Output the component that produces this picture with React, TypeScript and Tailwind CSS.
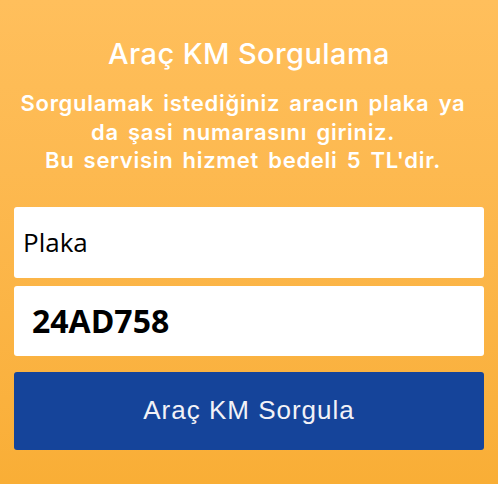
export default function App() {
  return (
    <div className="flex h-[484px] w-[498px] flex-col bg-gradient-to-b from-[#ffbf5c] to-[#f9ae36] px-[14px] pt-[36px]">
      <h1 className="text-center font-['Inter',sans-serif] text-[29px] leading-[36px] font-medium tracking-[0.4px] text-white">
        Araç KM Sorgulama
      </h1>
      <p className="mt-[17px] pr-[12px] text-center font-['Inter',sans-serif] text-[22px] leading-[28.5px] font-semibold tracking-[0.7px] [word-spacing:3px] whitespace-nowrap text-white">
        Sorgulamak istediğiniz aracın plaka ya
        <br />
        da şasi numarasını giriniz.
        <br />
        Bu servisin hizmet bedeli 5 TL'dir.
      </p>
      <div className="mt-[32px] flex flex-col">
        <input
          className="h-[71px] w-full rounded-[3px] bg-white pl-[9px] font-['Open_Sans',sans-serif] text-[26px] text-black outline-none placeholder:text-black"
          placeholder="Plaka"
          readOnly
        />
        <input
          className="mt-[8px] h-[70px] w-full rounded-[3px] bg-white pl-[18px] font-['Open_Sans',sans-serif] text-[32px] font-bold text-black outline-none"
          defaultValue="24AD758"
          readOnly
        />
        <button className="mt-[16px] h-[78px] w-full rounded-[3px] bg-[#15449a] font-['Liberation_Sans',sans-serif] text-[26px] tracking-[1px] text-[#f2f2f7]">
          Araç KM Sorgula
        </button>
      </div>
    </div>
  );
}
